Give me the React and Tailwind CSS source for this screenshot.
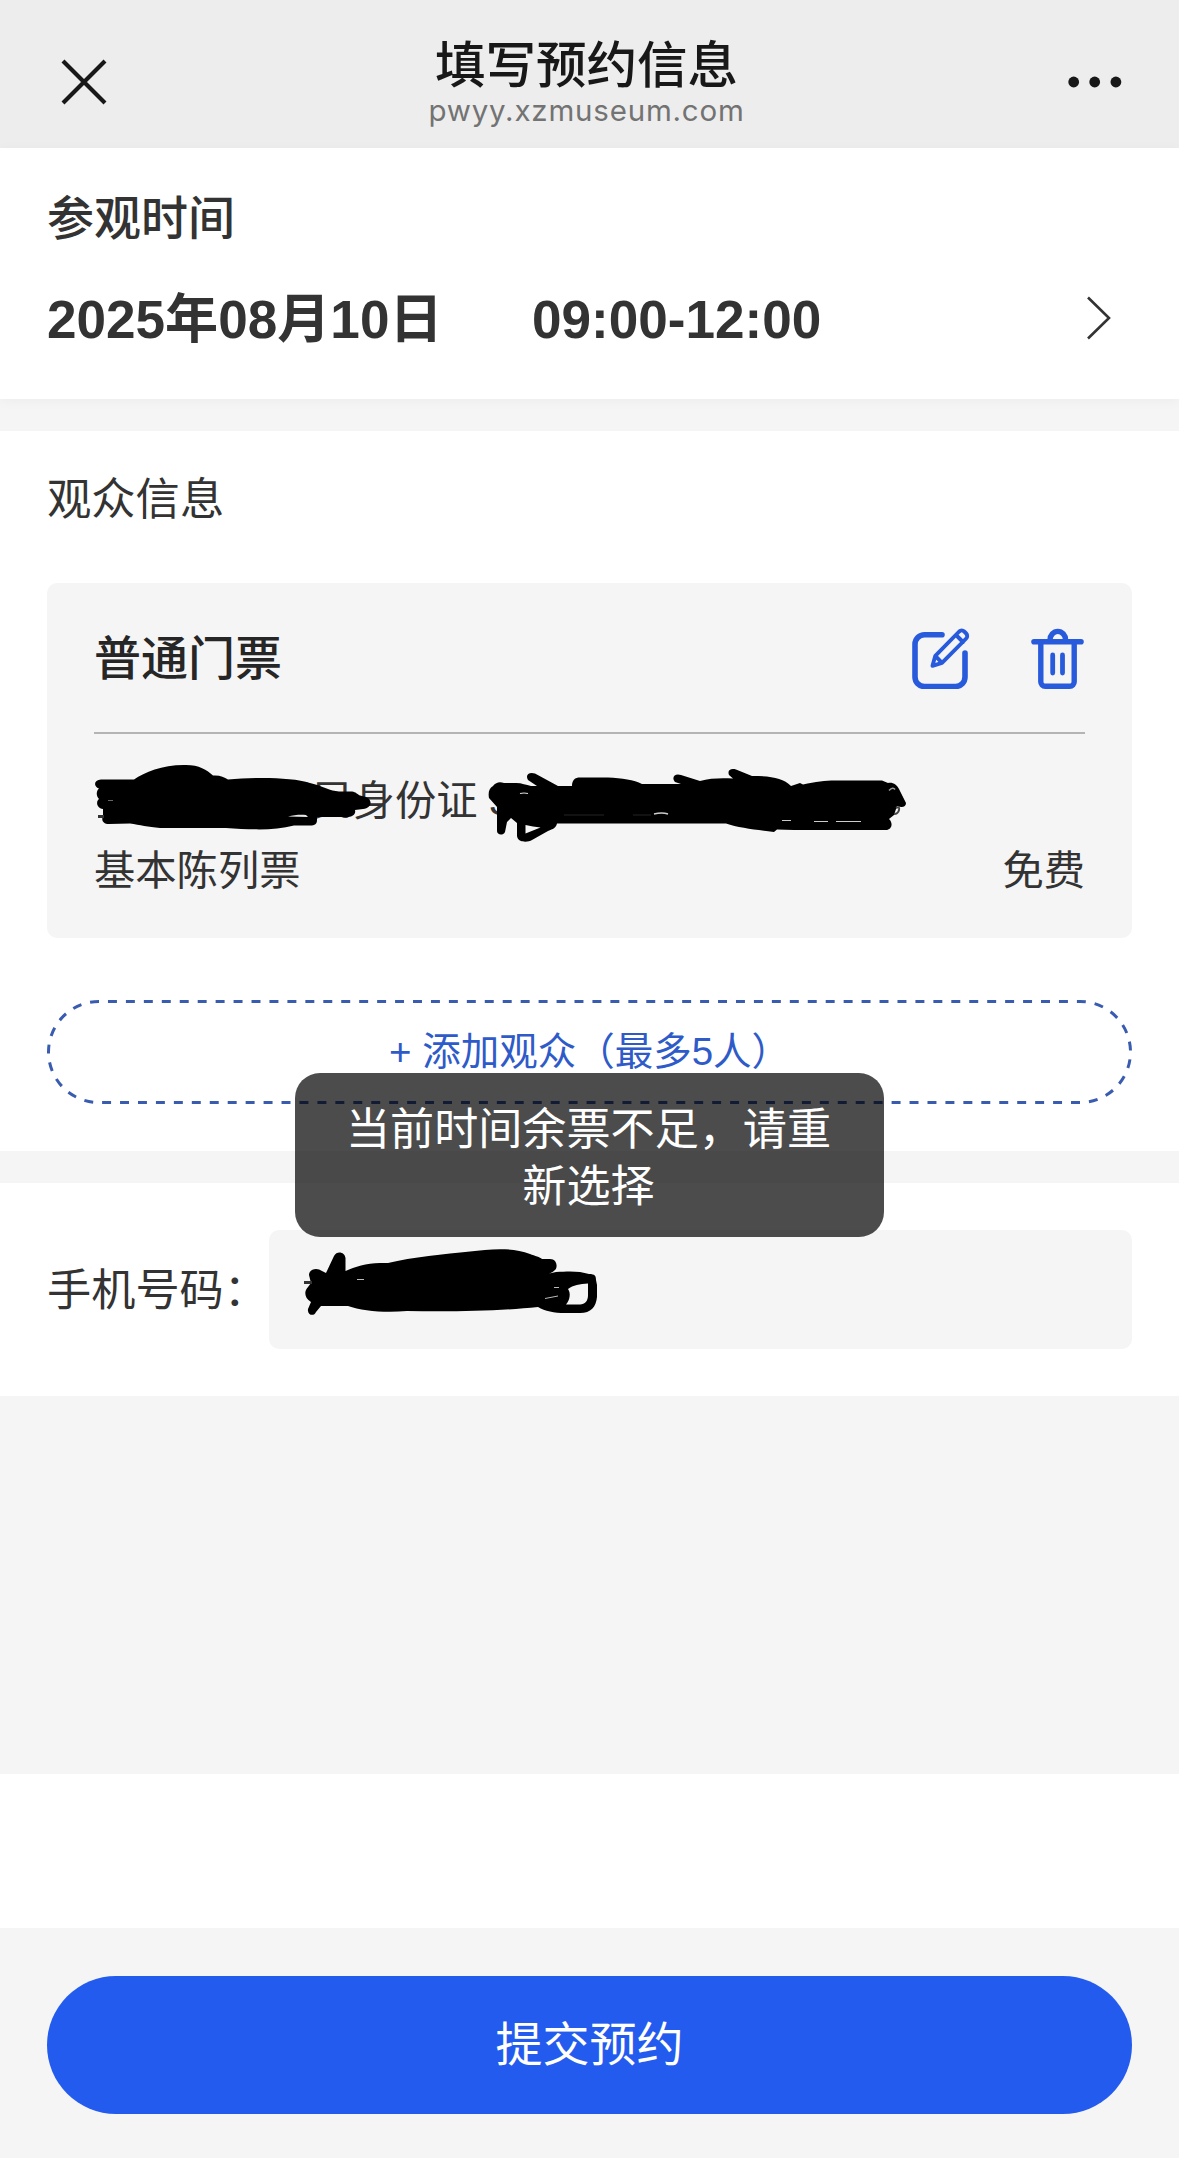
// 预约信息填写页:参观时间、观众信息、手机号码与提交按钮

function CloseIcon() {
  return (
    <svg className="h-[48px] w-[48px]" viewBox="0 0 48 48" fill="none" stroke="#181818" strokeWidth="4.2">
      <path d="M3 3 45 45M45 3 3 45" />
    </svg>
  );
}

function MoreIcon() {
  return (
    <svg className="h-[12px] w-[54px]" viewBox="0 0 54 12" fill="#181818">
      <circle cx="5.7" cy="6" r="5.4" />
      <circle cx="26.7" cy="6" r="5.4" />
      <circle cx="47.9" cy="6" r="5.4" />
    </svg>
  );
}

function EditIcon() {
  return (
    <svg
      className="h-[62px] w-[60px]"
      viewBox="0 0 60 62"
      fill="none"
      stroke="#285bdc"
      strokeLinecap="round"
      strokeLinejoin="round"
    >
      <path
        d="M31 7.8H13.5A9.500 9.500 0 0 0 4 17.300v32.700a9.500 9.500 0 0 0 9.500 9.500h31a9.500 9.500 0 0 0 9.500-9.500V26"
        strokeWidth="5.6"
      />
      <path
        d="M48.2 4.500a3.600 3.600 0 0 1 5 0l2 2a3.600 3.600 0 0 1 0 5L31 35.800 21.500 38.800 24.300 28.800zM45 8l7 7M24.300 28.800l6.700 7"
        strokeWidth="3.9"
      />
    </svg>
  );
}

function TrashIcon() {
  return (
    <svg
      className="h-[62px] w-[54px]"
      viewBox="0 0 54 62"
      fill="none"
      stroke="#285bdc"
      strokeLinecap="round"
      strokeLinejoin="round"
    >
      <path d="M3 14.7h47" strokeWidth="5.6" />
      <path d="M19 13a7.800 8.600 0 0 1 15.600 0" strokeWidth="5.4" />
      <path d="M9.800 16v38.500a4.500 4.500 0 0 0 4.500 4.800h24.400a4.500 4.500 0 0 0 4.500-4.800V16" strokeWidth="5.4" />
      <path d="M21.700 28v18M31.500 28v18" strokeWidth="4.800" />
    </svg>
  );
}

// 姓名涂抹
function NameMask() {
  return (
    <svg className="absolute -left-[14px] -top-[2px] h-[80px] w-[300px]" viewBox="80 760 300 80">
      <path
        fill="#000"
        d="M101 779.500H134C145 772 163 764.500 186 765C199 765 207 770 213 775.500C220 775 224 777 228 779.500C255 777 292 777 310 783C323 786 330 791 339 791.500H352C356 792 357 794 360 795.500L366 797C373 800 372 808 363 809L355 810C356 814 353 817 346 817H317V820C317 824 315 825.500 310 825.500H294C274 831 250 829.500 226 828H160C148 827 140 825 130 823.500L109 824C103 824 101 820 103 816V809C96 808 96 801 99 799C96 796 96 791 99 788.500C93 786 94 780 101 779.500Z"
      />
      <path d="M288 816.500c6-1.500 12-2 18-1.500l2 2z" fill="#e8e8e8" />
      <path d="M98 816.500h6" stroke="#333" strokeWidth="3" />
      <path d="M108 800.500h5" stroke="#666" strokeWidth="1" />
    </svg>
  );
}

// 证件号涂抹
function IdMask() {
  return (
    <svg className="absolute -top-[2px] left-[386px] h-[90px] w-[440px]" viewBox="480 760 440 90">
      <path
        fill="#000"
        d="M493 786C496 782 500 781.500 504 783H516C522 783 526 785 531 786L537 786L528 780C525 775 529 771.500 535 773.500L558 786H572C572 780 575 777.500 580 777.500H608C622 778 634 780 642 784H681L675 782C671 777 675 773 681 775L700 781C710 778 722 778 733 778.500L729 775C727 770 731 768 736 769.500L752 776C771 776 783 778 791 786L800 783L803 784.500C818 781 829 780 840 780.500L882 780.500L888 783C893 782 897 785 899 789L906 803C906 807 902 808 897 806L894 815L889 819C894 824 891 830 886 830H794L777 829.500L774 832C758 830 739 828 726 823.500H557C556 828 553 829 548 831L532 840C528 842.500 518 843 517 836V823L511 818L507 822L505 832C503 836 497 835 497 831V807L489 798C488 793 489 788 493 786Z"
      />
      <path d="M525.500 825v8.500l15-6c-5-.5-10-1.500-15-2.500z" fill="#f5f5f5" />
      <path d="M520 793.500q4-1 8 0" stroke="#ddd" strokeWidth="1.200" fill="none" />
      <path d="M654 814q8-2 14 0" stroke="#ccc" strokeWidth="1.500" fill="none" />
      <path d="M782 820.500h9M814 821.500h14M836 821.500h25" stroke="#ccc" strokeWidth="1.200" />
      <path d="M564 815h40M633 815h18" stroke="#333" strokeWidth=".7" />
      <path d="M889 790.500q4-4 6-1" stroke="#999" strokeWidth="1.500" fill="none" />
      <path d="M896 808q4-2 3 2t-5 4" stroke="#444" strokeWidth="2" fill="none" />
    </svg>
  );
}

// 手机号涂抹
function PhoneMask() {
  return (
    <svg className="absolute left-[21px] top-[10px] h-[90px] w-[320px]" viewBox="290 1240 320 90">
      <path
        fill="#000"
        d="M309 1275C309 1269 317 1267 322 1271L326 1273L334 1256C337 1250 345 1252 345.500 1258V1271C355 1267 366 1263 380 1263L388 1263C412 1257 445 1254 470 1251.500C490 1249 512 1247 530 1254C535 1256 540 1257 542 1259H550C557 1259 558 1267 555 1270C552 1273 548 1274 545 1274.500L556 1272C570 1271 580 1271 589 1274C595 1274 596 1276 596 1280L597 1285V1297C596 1307 591 1313 580 1313H565C554 1313 545 1311 538 1307C500 1311 450 1312 407 1311C385 1313 362 1311 348 1306L321 1306L316 1312C314 1317 307 1315 308 1309L311 1302C304 1298 304 1291 308 1287L311 1283Z"
      />
      <path d="M568 1289C573 1285 580 1284 588 1283.500V1295C588 1301 585 1304.500 580 1304.500H566C570 1300 571 1293 568 1289Z" fill="#f5f5f5" />
      <path d="M545 1298.500l13-2.500M554 1287.500h5" stroke="#bbb" strokeWidth="1" />
      <path d="M304 1282.500h8" stroke="#333" strokeWidth="3" />
      <path d="M357 1279.500h7" stroke="#bbb" strokeWidth="1" />
    </svg>
  );
}

export default function App() {
  return (
    <div className="relative flex h-[2158px] w-[1179px] flex-col overflow-hidden bg-[#f5f5f5] font-['Liberation_Sans','Noto_Sans_CJK_SC',sans-serif] text-[#333]">
      <header className="flex h-[148px] shrink-0 items-center justify-between bg-[#ededed] pl-[60px] pr-[57px] pt-[16px]">
        <CloseIcon />
        <div className="mt-[2px] flex flex-col items-center pr-[3px]">
          <h1 className="h-[54px] text-[50.5px] font-medium leading-[54px] text-[#181818]">填写预约信息</h1>
          <p className="h-[34px] font-['Inter','Noto_Sans_CJK_SC',sans-serif] text-[29.5px] leading-[34px] tracking-[0.8px] text-[#737373]">
            pwyy.xzmuseum.com
          </p>
        </div>
        <MoreIcon />
      </header>

      {/* 参观时间 */}
      <section className="h-[251px] shrink-0 bg-white pl-[47px] pr-[67px] pt-[41px] shadow-[0_2px_12px_rgba(0,0,0,0.04)]">
        <h2 className="h-[60px] text-[47px] font-medium leading-[60px]">参观时间</h2>
        <div className="mt-[36px] flex h-[70px] items-center text-[53.1px] font-bold leading-[70px]">
          <span className="w-[485px]">2025年08月10日</span>
          <span>09:00-12:00</span>
          <svg className="-mt-[5px] ml-auto h-[44px] w-[26px]" viewBox="0 0 26 44" fill="none" stroke="#333" strokeWidth="2.6">
            <path d="M2 1.500 23 22 2 42.500" />
          </svg>
        </div>
      </section>

      {/* 观众信息 */}
      <section className="relative mt-[32px] h-[720px] shrink-0 bg-white px-[47px] pt-[39px]">
        <h2 className="h-[60px] text-[44.3px] leading-[60px]">观众信息</h2>
        <div className="mt-[53px] h-[355px] rounded-[10px] bg-[#f5f5f5] px-[47px]">
          <div className="flex h-[151px] items-center border-b-2 border-[#b4b4b4]">
            <h3 className="grow pt-[2px] text-[47px] font-medium leading-[60px] text-[#262626]">普通门票</h3>
            <div className="flex items-center gap-[60px]">
              <EditIcon />
              <TrashIcon />
            </div>
          </div>
          <div className="relative mt-[28px] flex h-[70px] items-center pl-[177px] pt-[8px] text-[41.3px] leading-[70px]">
            <span className="w-[218px]">居民身份证</span>
            <span>3</span>
            <NameMask />
            <IdMask />
          </div>
          <div className="flex h-[70px] items-center justify-between pt-[7px] text-[41.3px] leading-[70px]">
            <span>基本陈列票</span>
            <span>免费</span>
          </div>
        </div>
        <button className="relative mt-[62px] flex h-[104px] w-full items-center justify-center text-[38.5px] leading-[60px] text-[#2f5bc9]">
          <svg className="absolute inset-0 h-full w-full" viewBox="0 0 1085 104" fill="none">
            <rect
              x="1.5"
              y="1.5"
              width="1082"
              height="101"
              rx="50.5"
              pathLength="2286"
              stroke="#3a5cb0"
              strokeWidth="3"
              strokeDasharray="9 9"
              strokeDashoffset="9"
            />
          </svg>
          + 添加观众（最多5人）
        </button>
      </section>

      {/* 手机号码 */}
      <section className="mt-[32px] flex h-[213px] shrink-0 items-center bg-white px-[47px]">
        <label className="w-[222px] whitespace-nowrap pt-[2px] text-[44.2px] leading-[60px]">手机号码：</label>
        <div className="relative h-[119px] grow rounded-[10px] bg-[#f5f5f5]">
          <PhoneMask />
        </div>
      </section>

      <div className="mt-[378px] h-[154px] shrink-0 bg-white" />

      <footer className="h-[230px] shrink-0 px-[47px] pt-[48px]">
        <button className="h-[138px] w-full rounded-full bg-[#235bee] text-[47px] leading-[138px] text-white">
          提交预约
        </button>
      </footer>

      {/* 轻提示 */}
      <div className="absolute left-[295px] top-[1073px] w-[589px] rounded-[25px] bg-black/70 pb-[22px] pl-[48px] pr-[50px] pt-[28px] text-center text-[44.1px] leading-[57px] text-white">
        当前时间余票不足，请重新选择
      </div>
    </div>
  );
}
